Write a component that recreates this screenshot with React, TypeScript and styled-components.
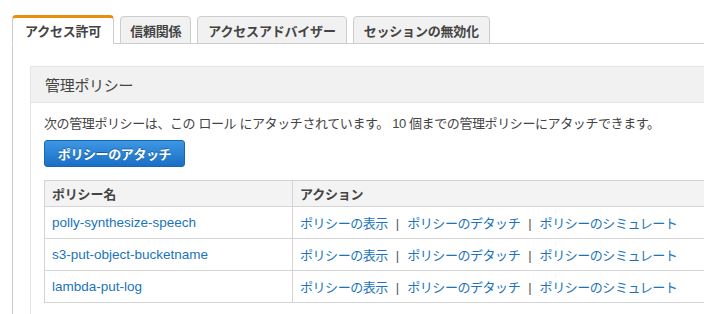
import React from "react";
import styled, { createGlobalStyle } from "styled-components";

const Global = createGlobalStyle`
  html, body { margin: 0; padding: 0; background: #fff; }
  body {
    font-family: "Liberation Sans", "Noto Sans CJK JP", sans-serif;
    color: #444;
    overflow: hidden;
  }
`;

const Page = styled.div`
  padding: 15px 0 0 12px;
  width: 704px;
  height: 314px;
  box-sizing: border-box;
  overflow: hidden;
`;

const TabList = styled.div`
  display: flex;
  align-items: flex-end;
  gap: 6px;
  height: 28px;
  border-bottom: 1px solid #cccccc;
`;

const Tab = styled.div<{ $active?: boolean; $pad: number }>`
  box-sizing: border-box;
  height: ${(p) => (p.$active ? 29 : 28)}px;
  margin-bottom: -1px;
  padding: 0 ${(p) => p.$pad}px;
  display: flex;
  align-items: center;
  font-size: 13px;
  font-weight: bold;
  color: #444;
  white-space: nowrap;
  letter-spacing: -0.2px;
  border: 1px solid #cccccc;
  border-radius: 4px 4px 0 0;
  background: ${(p) => (p.$active ? "#fff" : "#f1f1f1")};
  ${(p) =>
    p.$active
      ? `border-top: 3px solid #e8900c; border-bottom: 1px solid #fff;`
      : `border-bottom: 1px solid #cccccc;`}
`;

const Content = styled.div`
  border-left: 1px solid #cccccc;
  padding: 22px 0 0 17px;
  height: 300px;
`;

const Panel = styled.section`
  border-left: 1px solid #e4e4e4;
  border-top: 1px solid #e4e4e4;
  height: 300px;
`;

const PanelHeader = styled.h2`
  margin: 0;
  height: 36px;
  box-sizing: border-box;
  padding: 0 14px;
  display: flex;
  align-items: center;
  background: #f1f1f1;
  border-bottom: 1px solid #e4e4e4;
  font-size: 15px;
  font-weight: normal;
  color: #444;
  letter-spacing: -0.3px;
`;

const PanelBody = styled.div`
  padding: 12px 0 0 13px;
`;

const Note = styled.p`
  margin: 0;
  font-size: 13px;
  line-height: 18px;
  color: #444;
  white-space: nowrap;
  letter-spacing: -0.4px;
`;

const PrimaryButton = styled.button`
  margin-top: 7px;
  width: 141px;
  height: 27px;
  box-sizing: border-box;
  border: 1px solid #1b67b3;
  border-radius: 3px;
  background: linear-gradient(#3c97e4, #1a6fc4);
  color: #fff;
  font-family: inherit;
  font-size: 13px;
  font-weight: bold;
  text-shadow: 0 -1px 0 rgba(0, 0, 0, 0.35);
  letter-spacing: -0.4px;
  padding: 0;
  display: flex;
  align-items: center;
  justify-content: center;
`;

const Table = styled.table`
  margin-top: 13px;
  border-collapse: collapse;
  width: 700px;
  table-layout: fixed;
  font-size: 13px;
`;

const Th = styled.th<{ $w?: number }>`
  ${(p) => (p.$w ? `width: ${p.$w}px;` : "")}
  height: 25px;
  padding: 0 7px;
  text-align: left;
  background: #f3f3f3;
  border: 1px solid #d4d4d4;
  font-weight: bold;
  color: #444;
  letter-spacing: -0.2px;
`;

const Td = styled.td`
  height: 31px;
  padding: 0 7px;
  border: 1px solid #d4d4d4;
  white-space: nowrap;
`;

const Name = styled.a`
  color: #1b74bb;
  text-decoration: none;
  font-size: 13.5px;
`;

const Link = styled.a`
  color: #1b74bb;
  text-decoration: none;
  letter-spacing: -0.45px;
`;

const Sep = styled.span`
  color: #555;
  margin: 0 8px;
`;

const tabs = [
  { label: "アクセス許可", pad: 12, active: true },
  { label: "信頼関係", pad: 9 },
  { label: "アクセスアドバイザー", pad: 10 },
  { label: "セッションの無効化", pad: 10 },
];

const policies = [
  "polly-synthesize-speech",
  "s3-put-object-bucketname",
  "lambda-put-log",
];

export default function App() {
  return (
    <>
      <Global />
      <Page>
        <TabList>
          {tabs.map((t) => (
            <Tab key={t.label} $active={t.active} $pad={t.pad}>
              {t.label}
            </Tab>
          ))}
        </TabList>
        <Content>
          <Panel>
            <PanelHeader>管理ポリシー</PanelHeader>
            <PanelBody>
              <Note>
                次の管理ポリシーは、この ロール にアタッチされています。 10
                個までの管理ポリシーにアタッチできます。
              </Note>
              <PrimaryButton>ポリシーのアタッチ</PrimaryButton>
              <Table>
                <thead>
                  <tr>
                    <Th $w={233}>ポリシー名</Th>
                    <Th>アクション</Th>
                  </tr>
                </thead>
                <tbody>
                  {policies.map((p) => (
                    <tr key={p}>
                      <Td>
                        <Name>{p}</Name>
                      </Td>
                      <Td>
                        <Link>ポリシーの表示</Link>
                        <Sep>|</Sep>
                        <Link>ポリシーのデタッチ</Link>
                        <Sep>|</Sep>
                        <Link>ポリシーのシミュレート</Link>
                      </Td>
                    </tr>
                  ))}
                </tbody>
              </Table>
            </PanelBody>
          </Panel>
        </Content>
      </Page>
    </>
  );
}
